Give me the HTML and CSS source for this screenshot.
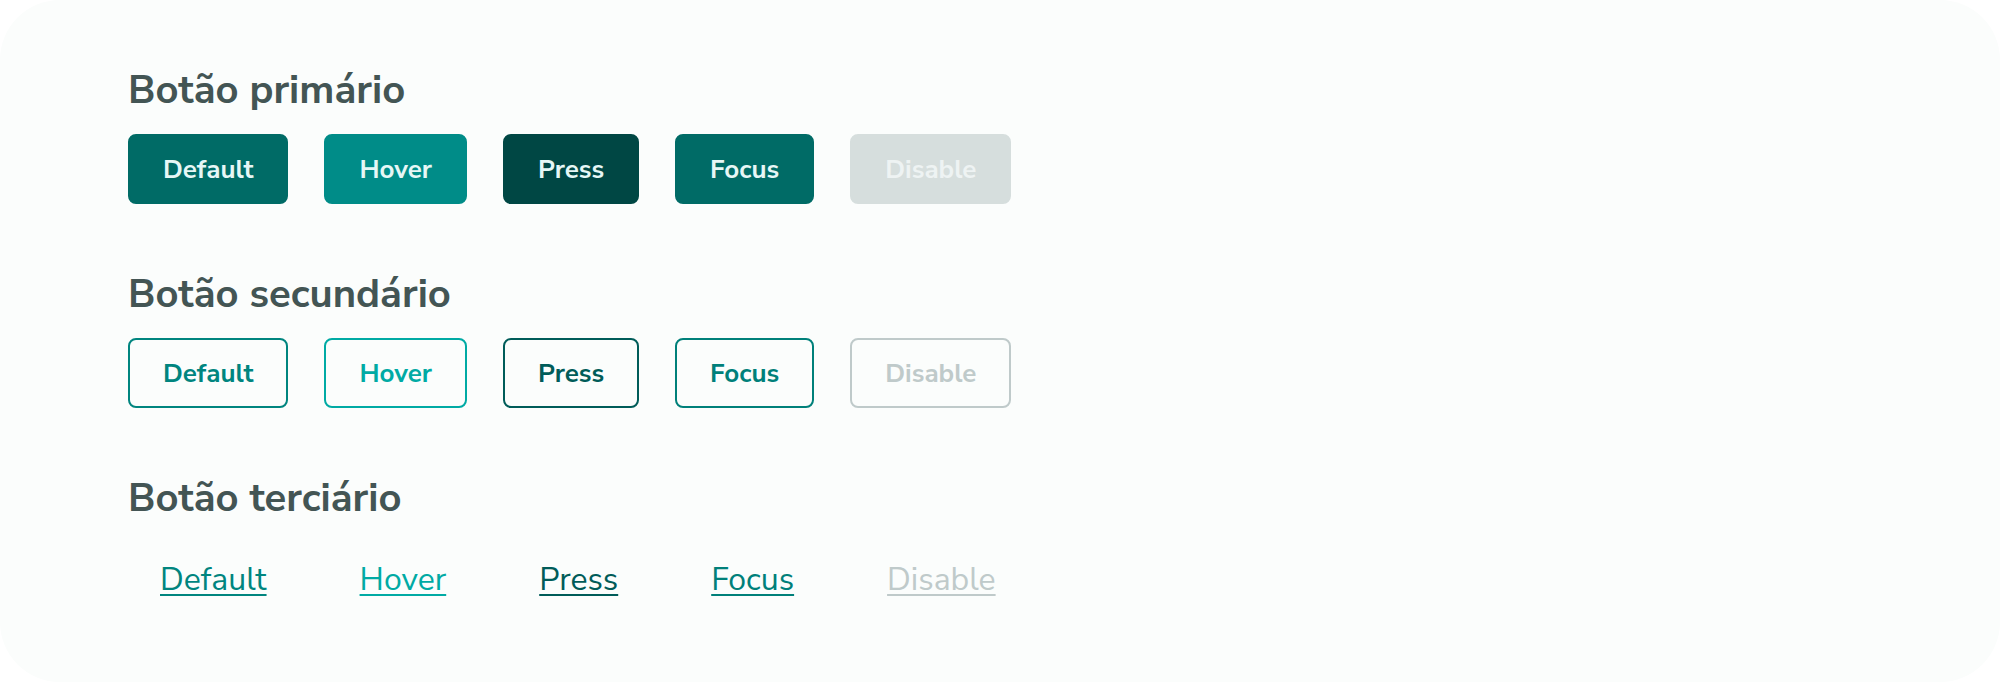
FILE: index.html
```html
<!DOCTYPE html>
<html lang="pt-BR">
<head>
<meta charset="utf-8">
<title>Botões</title>
<link rel="stylesheet" href="styles.css">
</head>
<body>
<main class="card">
  <section class="section">
    <h2 class="title">Botão primário</h2>
    <div class="row">
      <button class="btn primary default">Default</button>
      <button class="btn primary hover">Hover</button>
      <button class="btn primary press">Press</button>
      <button class="btn primary focus">Focus</button>
      <button class="btn primary disable">Disable</button>
    </div>
  </section>
  <section class="section">
    <h2 class="title">Botão secundário</h2>
    <div class="row">
      <button class="btn secondary default">Default</button>
      <button class="btn secondary hover">Hover</button>
      <button class="btn secondary press">Press</button>
      <button class="btn secondary focus">Focus</button>
      <button class="btn secondary disable">Disable</button>
    </div>
  </section>
  <section class="section">
    <h2 class="title">Botão terciário</h2>
    <div class="row row-tertiary">
      <button class="btn tertiary default">Default</button>
      <button class="btn tertiary hover">Hover</button>
      <button class="btn tertiary press">Press</button>
      <button class="btn tertiary focus">Focus</button>
      <button class="btn tertiary disable">Disable</button>
    </div>
  </section>
</main>
</body>
</html>
```
FILE: styles.css
```css
html, body {
  margin: 0;
  padding: 0;
  background: #ffffff;
}

body {
  font-family: "Nunito Sans", Lato, "Open Sans", sans-serif;
}

.card {
  box-sizing: border-box;
  width: 2000px;
  height: 682px;
  border-radius: 60px;
  background: #fbfdfc;
  padding: 66px 0 0 128px;
}

.section + .section {
  margin-top: 66px;
}

.title {
  margin: 0 0 20px;
  font-size: 40px;
  line-height: 48px;
  font-weight: 700;
  color: #435554;
}

.row {
  display: flex;
  gap: 36px;
}

.row-tertiary {
  gap: 29px;
}

.btn {
  box-sizing: border-box;
  height: 70px;
  padding: 0 33px;
  border-radius: 8px;
  border: 2px solid transparent;
  background: transparent;
  font-family: inherit;
  font-size: 26px;
  font-weight: 700;
  display: flex;
  align-items: center;
  justify-content: center;
  cursor: pointer;
}

/* Primary */
.primary { color: #e6f7f6; }
.primary.default { background: #006b66; border-color: #006b66; }
.primary.hover { background: #008c88; border-color: #008c88; }
.primary.press { background: #004744; border-color: #004744; }
.primary.focus { background: #006b66; border-color: #006b66; }
.primary.disable { background: #d6dedd; border-color: #d6dedd; color: #eef3f3; }

/* Secondary */
.secondary.default { border-color: #00857f; color: #00857f; }
.secondary.hover { border-color: #00aaa4; color: #00aaa4; }
.secondary.press { border-color: #005c59; color: #005c59; }
.secondary.focus { border-color: #00807a; color: #00807a; }
.secondary.disable { border-color: #bfcaca; color: #bfcaca; }

/* Tertiary */
.tertiary {
  padding: 4px 30px 0;
  border-width: 2px;
  font-size: 32px;
  font-weight: 400;
  text-decoration: underline;
  text-decoration-thickness: 2px;
  text-underline-offset: 4px;
}
.tertiary.default { color: #00857f; }
.tertiary.hover { color: #00aaa4; }
.tertiary.press { color: #005c59; }
.tertiary.focus { color: #00807a; }
.tertiary.disable { color: #bfcaca; }
```
